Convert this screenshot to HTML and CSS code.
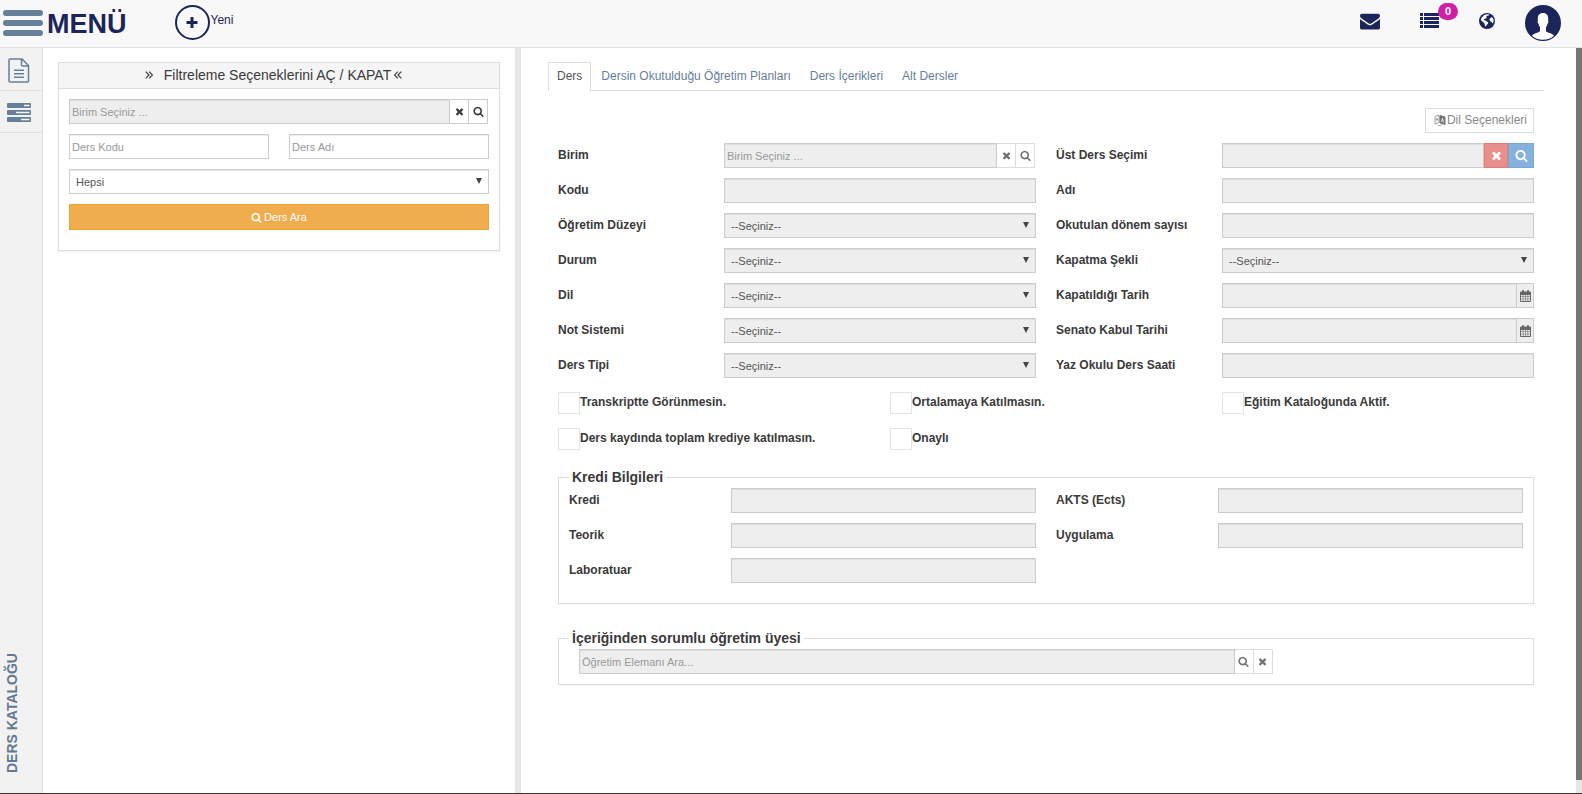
FILE: index.html
```html
<!DOCTYPE html>
<html lang="tr">
<head>
<meta charset="utf-8">
<title>Ders Kataloğu</title>
<link rel="stylesheet" href="styles.css">
</head>
<body>
<svg class="defs" width="0" height="0" aria-hidden="true">
  <symbol id="i-times" viewBox="0 0 1792 1792"><path d="M1490 1322q0 40-28 68l-136 136q-28 28-68 28t-68-28l-294-294-294 294q-28 28-68 28t-68-28l-136-136q-28-28-28-68t28-68l294-294-294-294q-28-28-28-68t28-68l136-136q28-28 68-28t68 28l294 294 294-294q28-28 68-28t68 28l136 136q28 28 28 68t-28 68l-294 294 294 294q28 28 28 68z"/></symbol>
  <symbol id="i-search" viewBox="0 0 1792 1792"><path d="M1216 832q0-185-131.500-316.500t-316.500-131.500-316.500 131.500-131.500 316.500 131.500 316.500 316.500 131.500 316.500-131.500 131.500-316.500zm512 832q0 52-38 90t-90 38q-54 0-90-38l-343-342q-179 124-399 124-143 0-273.500-55.500t-225-150-150-225-55.500-273.500 55.500-273.500 150-225 225-150 273.500-55.500 273.500 55.500 225 150 150 225 55.500 273.500q0 220-124 399l343 343q37 37 37 90z"/></symbol>
  <symbol id="i-mail" viewBox="0 0 1792 1792"><path d="M1792 710v794q0 66-47 113t-113 47h-1472q-66 0-113-47t-47-113v-794q44 49 101 87 362 246 497 345 57 42 92.500 65.500t94.500 48 110 24.500h2q51 0 110-24.500t94.500-48 92.500-65.500q170-123 498-345 57-39 100-87zm0-294q0 79-49 151t-122 123q-376 261-468 325-10 7-42.500 31t-54 38.500-52 32.500-57.500 27-50 9h-2q-23 0-50-9t-57.500-27-52-32.500-54-38.500-42.500-31q-91-64-262-182.500t-205-142.500q-62-42-117-115.500t-55-136.500q0-78 41.500-130t118.500-52h1472q65 0 112.500 47t47.500 113z"/></symbol>
  <symbol id="i-cal" viewBox="0 0 11 12"><path fill-rule="evenodd" d="M1 1.500h1V1q0-1 1-1t1 1v.5h3V1q0-1 1-1t1 1v.5h1q1 0 1 1V11q0 1-1 1H1q-1 0-1-1V2.500q0-1 1-1zM1 5v1.500h1.800V5zm2.400 0v1.500h1.800V5zm2.400 0v1.500h1.800V5zm2.400 0v1.500H10V5zM1 7.100v1.600h1.800V7.100zm2.400 0v1.600h1.800V7.100zm2.400 0v1.600h1.800V7.100zm2.400 0v1.600H10V7.100zM1 9.300V11h1.800V9.300zm2.400 0V11h1.800V9.300zm2.400 0V11h1.800V9.300zm2.400 0V11H10V9.300z"/></symbol>
  <symbol id="i-right" viewBox="0 0 8 8"><path d="M.7.700 4 4 .7 7.300M4.200.700 7.500 4 4.200 7.300" fill="none" stroke="currentColor" stroke-width="1.200"/></symbol>
  <symbol id="i-left" viewBox="0 0 8 8"><path d="M7.300.700 4 4l3.300 3.300M3.800.700.500 4l3.300 3.300" fill="none" stroke="currentColor" stroke-width="1.200"/></symbol>
</svg>

<header class="topbar">
  <button class="menu" type="button">
    <svg class="bars" width="40" height="26" viewBox="0 0 40 26"><rect width="40" height="6" rx="3"/><rect y="10" width="40" height="6" rx="3"/><rect y="20" width="40" height="6" rx="3"/></svg>
    <span>MENÜ</span>
  </button>
  <button class="new" type="button">
    <svg width="35" height="35" viewBox="0 0 35 35"><circle cx="17.500" cy="17.500" r="16.500" fill="none" stroke="#1c2559" stroke-width="2"/><path d="M17 12v11M11.500 17.500h11" stroke="#1c2559" stroke-width="3"/></svg>
    <span>Yeni</span>
  </button>
  <nav class="tools" aria-label="Kullanıcı">
    <a href="#" aria-label="Mesajlar"><svg width="20" height="20"><use href="#i-mail"/></svg></a>
    <a href="#" aria-label="Bildirimler"><svg width="19" height="15" viewBox="0 0 19 15"><path d="M0 0h3v3H0zm4 0h15v3H4zM0 4h3v3H0zm4 0h15v3H4zM0 8h3v3H0zm4 0h15v3H4zM0 12h3v3H0zm4 0h15v3H4z"/></svg><span class="badge">0</span></a>
    <a href="#" aria-label="Dil"><svg width="16" height="16" viewBox="0 0 16 16"><circle cx="8" cy="8" r="8"/><path fill="#f8f8f8" d="M5.500 1.700 8 1.200l2.500.3-.8 1-1.500.3-1 1.200.6 1-1.700.7-1.200.6.1.8 1.500.3 1.700 1.400 1.200.6-.6 1.500-1.300 1-.5 1.500-1-.3-.4-2.300-1.500-1.800L2.600 8l-.8-1.300.7-2 1.400-1.500zM11 5.200l1.500-1 1.200.6 1 2.200-.3 2.300-1.100 1.200-.7-1.700-1.500-.5-.7-1.500z"/></svg></a>
    <a class="me" href="#" aria-label="Profil"><svg width="36" height="36" viewBox="0 0 36 36"><circle cx="18" cy="18" r="18"/><path fill="#fff" d="M18 8c3.500 0 5.200 2.300 5.200 5.500 0 .9-.1 1.700-.1 2.300.7.200.3 2.300-.6 3-.3 1.500-.8 2.600-1.500 3.400v3.500c0 1.200 1.500 1.600 3.500 2.300 2.300.8 4 1.600 4.500 2.800-2.700 2.400-6.500 4-11 4s-8.300-1.600-11-4c.5-1.200 2.200-2 4.500-2.800 2-.7 3.500-1.100 3.500-2.300v-3.500c-.7-.8-1.200-1.900-1.500-3.400-.9-.7-1.300-2.800-.6-3 0-.6-.1-1.400-.1-2.300C12.800 10.300 14.500 8 18 8z"/></svg></a>
  </nav>
</header>

<div class="shell">
  <aside class="rail">
    <a href="#" aria-label="Belge"><svg class="line" width="22" height="25" viewBox="0 0 22 25"><path d="M2 1h12l6.500 6.500V23q0 1-1 1H2q-1 0-1-1V2q0-1 1-1zM13.500 1v6q0 1 1 1h6M6 12.200h10M6 15.700h10M6 19.200h10"/></svg></a>
    <a href="#" aria-label="Liste"><svg width="24" height="19" viewBox="0 0 24 19"><g fill="#668099"><rect width="24" height="5" rx="1"/><rect y="7" width="24" height="5" rx="1"/><rect y="14" width="24" height="5" rx="1"/></g><path d="M17 2.500h5.500M9 9.500h13.500M14 16.500h8.500" stroke="#f2f2f2" stroke-width="1.600"/></svg></a>
    <span class="rail-title">DERS KATALOĞU</span>
  </aside>

  <section class="side">
    <form class="card">
      <button class="card-head" type="button"><svg width="8" height="8"><use href="#i-right"/></svg><span>Filtreleme Seçeneklerini AÇ / KAPAT</span><svg width="8" height="8"><use href="#i-left"/></svg></button>
      <div class="card-body">
        <div class="group"><input class="field grey" type="text" placeholder="Birim Seçiniz ..." aria-label="Birim" readonly><button class="addon" type="button" aria-label="Temizle"><svg width="11" height="11"><use href="#i-times"/></svg></button><button class="addon" type="button" aria-label="Ara"><svg width="11" height="11"><use href="#i-search"/></svg></button></div>
        <div class="pair"><input class="field" type="text" placeholder="Ders Kodu" aria-label="Ders Kodu"><input class="field" type="text" placeholder="Ders Adı" aria-label="Ders Adı"></div>
        <div class="select"><select class="field" aria-label="Durum filtresi"><option>Hepsi</option></select></div>
        <button class="submit" type="submit"><svg width="11" height="11"><use href="#i-search"/></svg>Ders Ara</button>
      </div>
    </form>
  </section>

  <main class="content">
    <nav class="tabs" aria-label="Sekmeler">
      <a class="active" href="#">Ders</a><a href="#">Dersin Okutulduğu Öğretim Planları</a><a href="#">Ders İçerikleri</a><a href="#">Alt Dersler</a>
    </nav>
    <form class="form">
      <button class="lang" type="button"><svg class="thin" width="12" height="12" viewBox="0 0 12 12"><path d="M1 2.500 5 1v7.500L1 10zM2 5.500h2M3 4v3" stroke-width=".7"/><path d="m6 1.500 5 1.500v7.500L6 9z" fill="#777"/><path d="m7.500 8 1-3.500 1 4" stroke="#fff" stroke-width=".8"/><path d="M3.500 11.200q2.500.8 4-.2" stroke-width=".7"/></svg>Dil Seçenekleri</button>

      <div class="grid">
        <div class="row"><label for="birim">Birim</label><div class="group"><input id="birim" class="field grey" type="text" placeholder="Birim Seçiniz ..." readonly><button class="addon off" type="button" aria-label="Temizle"><svg width="11" height="11"><use href="#i-times"/></svg></button><button class="addon off" type="button" aria-label="Ara"><svg width="11" height="11"><use href="#i-search"/></svg></button></div></div>
        <div class="row"><label for="ust">Üst Ders Seçimi</label><div class="group"><input id="ust" class="field grey" type="text" readonly><button class="addon red" type="button" aria-label="Temizle"><svg width="13" height="13"><use href="#i-times"/></svg></button><button class="addon blue" type="button" aria-label="Ara"><svg width="13" height="13"><use href="#i-search"/></svg></button></div></div>
        <div class="row"><label for="kodu">Kodu</label><input id="kodu" class="field grey" type="text" readonly></div>
        <div class="row"><label for="adi">Adı</label><input id="adi" class="field grey" type="text" readonly></div>
        <div class="row"><label for="duzey">Öğretim Düzeyi</label><div class="select"><select id="duzey" class="field grey"><option>--Seçiniz--</option></select></div></div>
        <div class="row"><label for="donem">Okutulan dönem sayısı</label><input id="donem" class="field grey" type="text" readonly></div>
        <div class="row"><label for="durum">Durum</label><div class="select"><select id="durum" class="field grey"><option>--Seçiniz--</option></select></div></div>
        <div class="row"><label for="kapatma">Kapatma Şekli</label><div class="select"><select id="kapatma" class="field grey"><option>--Seçiniz--</option></select></div></div>
        <div class="row"><label for="dil">Dil</label><div class="select"><select id="dil" class="field grey"><option>--Seçiniz--</option></select></div></div>
        <div class="row"><label for="ktarih">Kapatıldığı Tarih</label><div class="group"><input id="ktarih" class="field grey" type="text" readonly><button class="addon date" type="button" aria-label="Tarih seç"><svg width="11" height="12"><use href="#i-cal"/></svg></button></div></div>
        <div class="row"><label for="not">Not Sistemi</label><div class="select"><select id="not" class="field grey"><option>--Seçiniz--</option></select></div></div>
        <div class="row"><label for="senato">Senato Kabul Tarihi</label><div class="group"><input id="senato" class="field grey" type="text" readonly><button class="addon date" type="button" aria-label="Tarih seç"><svg width="11" height="12"><use href="#i-cal"/></svg></button></div></div>
        <div class="row"><label for="tip">Ders Tipi</label><div class="select"><select id="tip" class="field grey"><option>--Seçiniz--</option></select></div></div>
        <div class="row"><label for="yaz">Yaz Okulu Ders Saati</label><input id="yaz" class="field grey" type="text" readonly></div>
      </div>

      <div class="checks">
        <label><input type="checkbox">Transkriptte Görünmesin.</label>
        <label><input type="checkbox">Ortalamaya Katılmasın.</label>
        <label><input type="checkbox">Eğitim Kataloğunda Aktif.</label>
        <label><input type="checkbox">Ders kaydında toplam krediye katılmasın.</label>
        <label><input type="checkbox">Onaylı</label>
      </div>

      <fieldset class="box credits">
        <legend>Kredi Bilgileri</legend>
        <div class="grid">
          <div class="row"><label for="kredi">Kredi</label><input id="kredi" class="field grey" type="text" readonly></div>
          <div class="row"><label for="akts">AKTS (Ects)</label><input id="akts" class="field grey" type="text" readonly></div>
          <div class="row"><label for="teorik">Teorik</label><input id="teorik" class="field grey" type="text" readonly></div>
          <div class="row"><label for="uygulama">Uygulama</label><input id="uygulama" class="field grey" type="text" readonly></div>
          <div class="row"><label for="lab">Laboratuar</label><input id="lab" class="field grey" type="text" readonly></div>
        </div>
      </fieldset>

      <fieldset class="box">
        <legend>İçeriğinden sorumlu öğretim üyesi</legend>
        <div class="group teacher"><input class="field grey" type="text" placeholder="Öğretim Elemanı Ara..." aria-label="Öğretim Elemanı" readonly><button class="addon off" type="button" aria-label="Ara"><svg width="11" height="11"><use href="#i-search"/></svg></button><button class="addon off" type="button" aria-label="Temizle"><svg width="11" height="11"><use href="#i-times"/></svg></button></div>
      </fieldset>
    </form>
  </main>
  <div class="scroll"><div class="thumb"></div></div>
</div>
</body>
</html>
```
FILE: styles.css
```css
* { box-sizing: border-box; }

body {
  margin: 0;
  min-height: 100vh;
  display: flex;
  flex-direction: column;
  background: #fff;
  border-bottom: 1px solid #3a332e;
  color: #3a3a3a;
  font: 12px/16px "Liberation Sans", Arial, sans-serif;
}

.defs { position: absolute; }
svg { display: block; flex: none; fill: currentColor; }
svg.bars { fill: #668099; }
svg.line { fill: none; stroke: #668099; stroke-width: 1.5; }
svg.thin { fill: none; stroke: #777; }
a { color: inherit; text-decoration: none; }
button { margin: 0; padding: 0; border: 0; background: none; color: inherit; font: inherit; }

/* top bar */
.topbar {
  display: flex;
  align-items: center;
  height: 48px;
  padding: 0 21px 2px 3px;
  background: #f8f8f8;
  border-bottom: 1px solid #e2e2e2;
  color: #1c2559;
}
.menu { display: flex; align-items: center; gap: 4px; font-size: 27px; line-height: 32px; font-weight: bold; }
.menu span { padding-top: 2px; }
.new { display: flex; align-items: center; gap: 1px; margin-left: 48px; }
.new span { padding-bottom: 5px; }
.tools { display: flex; align-items: center; margin-left: auto; }
.tools a { position: relative; margin-left: 40px; padding-bottom: 4px; }
.tools a.me { margin-left: 30px; padding-bottom: 0; }
.badge {
  position: absolute;
  left: 18px;
  top: -10px;
  width: 20px;
  height: 17px;
  border-radius: 9px;
  background: #cf1fa9;
  color: #fff;
  font-size: 11px;
  line-height: 17px;
  font-weight: bold;
  text-align: center;
}

.shell { flex: 1; display: flex; }

/* icon rail */
.rail {
  width: 43px;
  display: flex;
  flex-direction: column;
  padding-top: 1px;
  background: #f2f2f2;
  border-right: 1px solid #ddd;
}
.rail a {
  display: flex;
  align-items: center;
  height: 42px;
  padding: 1px 0 0 8px;
  border-bottom: 1px solid #e0e0e0;
}
.rail a + a { padding-left: 7px; }
.rail-title {
  margin: auto 0 20px 4px;
  align-self: flex-start;
  writing-mode: vertical-rl;
  transform: rotate(180deg);
  color: #63788f;
  font-size: 14px;
  font-weight: bold;
}

/* filter panel */
.side {
  flex: 0 0 478px;
  padding: 14px 15px;
  border-right: 6px solid #e6e6e6;
}
.card { border: 1px solid #ddd; box-shadow: 0 1px 1px rgba(0, 0, 0, .05); }
.card-head {
  display: flex;
  align-items: center;
  justify-content: center;
  gap: 3px;
  width: 100%;
  height: 26px;
  padding: 0 11px 1px 0;
  border-bottom: 1px solid #ddd;
  background: #f5f5f5;
  font-size: 14px;
}
.card-head span { padding-left: 8px; }
.card-body { display: grid; gap: 10px; padding: 10px 10px 20px; }
.pair { display: grid; grid-template-columns: 1fr 1fr; gap: 20px; }

/* controls */
.field {
  display: block;
  flex: 1;
  width: 100%;
  min-width: 0;
  height: 25px;
  margin: 0;
  padding: 1px 2px 0;
  border: 1px solid #ccc;
  border-radius: 0;
  background: #fff;
  box-shadow: inset 0 1px 1px rgba(0, 0, 0, .075);
  color: #555;
  font: 11px/16px "Liberation Sans", Arial, sans-serif;
}
.field::placeholder { color: #999; opacity: 1; }
.grey { background: #eee; }
.group { display: flex; flex: 1; min-width: 0; }
.addon {
  display: flex;
  align-items: center;
  justify-content: center;
  width: 19px;
  height: 25px;
  border: 1px solid #ccc;
  border-left: 0;
  background: #fff;
}
.side .group { padding-right: 1px; }
.off { border-color: #ddd; color: #707070; }
.row .off:last-child { margin-right: 1px; }
.red { width: 24px; border: 1px solid #e27c79; background: #e88f8c; color: #fff; }
.blue { width: 26px; border: 1px solid #74a9d8; background: #85b1dc; color: #fff; }
.date { width: 17px; background: #eee; color: #666; }

.select { position: relative; flex: 1; }
.select .field { appearance: none; padding-left: 6px; }
.select::after {
  content: "";
  position: absolute;
  right: 7px;
  top: 9px;
  border: solid transparent;
  border-width: 6px 3px 0;
  border-top-color: #444;
  pointer-events: none;
}
.submit {
  display: flex;
  align-items: center;
  justify-content: center;
  gap: 2px;
  height: 26px;
  border: 1px solid #eea236;
  background: #f0ad4e;
  color: #fff;
  font-size: 11px;
}

/* course form */
.content { flex: 1; padding: 14px 32px 20px 27px; }
.tabs { display: flex; gap: 1px; border-bottom: 1px solid #ddd; color: #668099; }
.tabs a { padding: 5px 8px 6px; border: 1px solid transparent; border-bottom: 0; }
.tabs .active { margin-bottom: -1px; padding-bottom: 7px; border-color: #ddd; background: #fff; color: #555; }
.form { padding: 17px 10px 0; }
.lang {
  display: flex;
  align-items: center;
  gap: 1px;
  height: 25px;
  margin: 0 0 10px auto;
  padding: 0 6px 2px 8px;
  border: 1px solid #ddd;
  color: #888;
}
.grid { display: grid; grid-template-columns: 1fr 1fr; gap: 10px 20px; }
.row { display: flex; align-items: center; }
.row label { flex: 0 0 166px; padding-bottom: 2px; font-weight: bold; }
.checks { display: grid; grid-template-columns: repeat(3, 1fr); gap: 14px 20px; margin: 14px 0 19px; }
.checks label { display: flex; font-weight: bold; line-height: 20px; white-space: nowrap; }
.checks input { appearance: none; width: 22px; height: 22px; margin: 0; border: 1px solid #e5e5e5; background: #fff; }

.box {
  min-width: 0;
  margin: 0 0 26px;
  padding: 2px 10px 10px;
  border: 1px solid #ddd;
  box-shadow: 0 1px 1px rgba(0, 0, 0, .03);
}
.box legend { padding: 0 3px; font-size: 14px; line-height: 17px; font-weight: bold; }
.credits { padding-bottom: 20px; }
.credits .row label { flex-basis: 162px; }
.teacher { width: calc(75% - 22px); margin-left: 10px; }

/* page scroll indicator */
.scroll { width: 6px; display: flex; background: #e6e6e6; }
.thumb { width: 6px; margin-bottom: 13px; background: #757575; }
```
